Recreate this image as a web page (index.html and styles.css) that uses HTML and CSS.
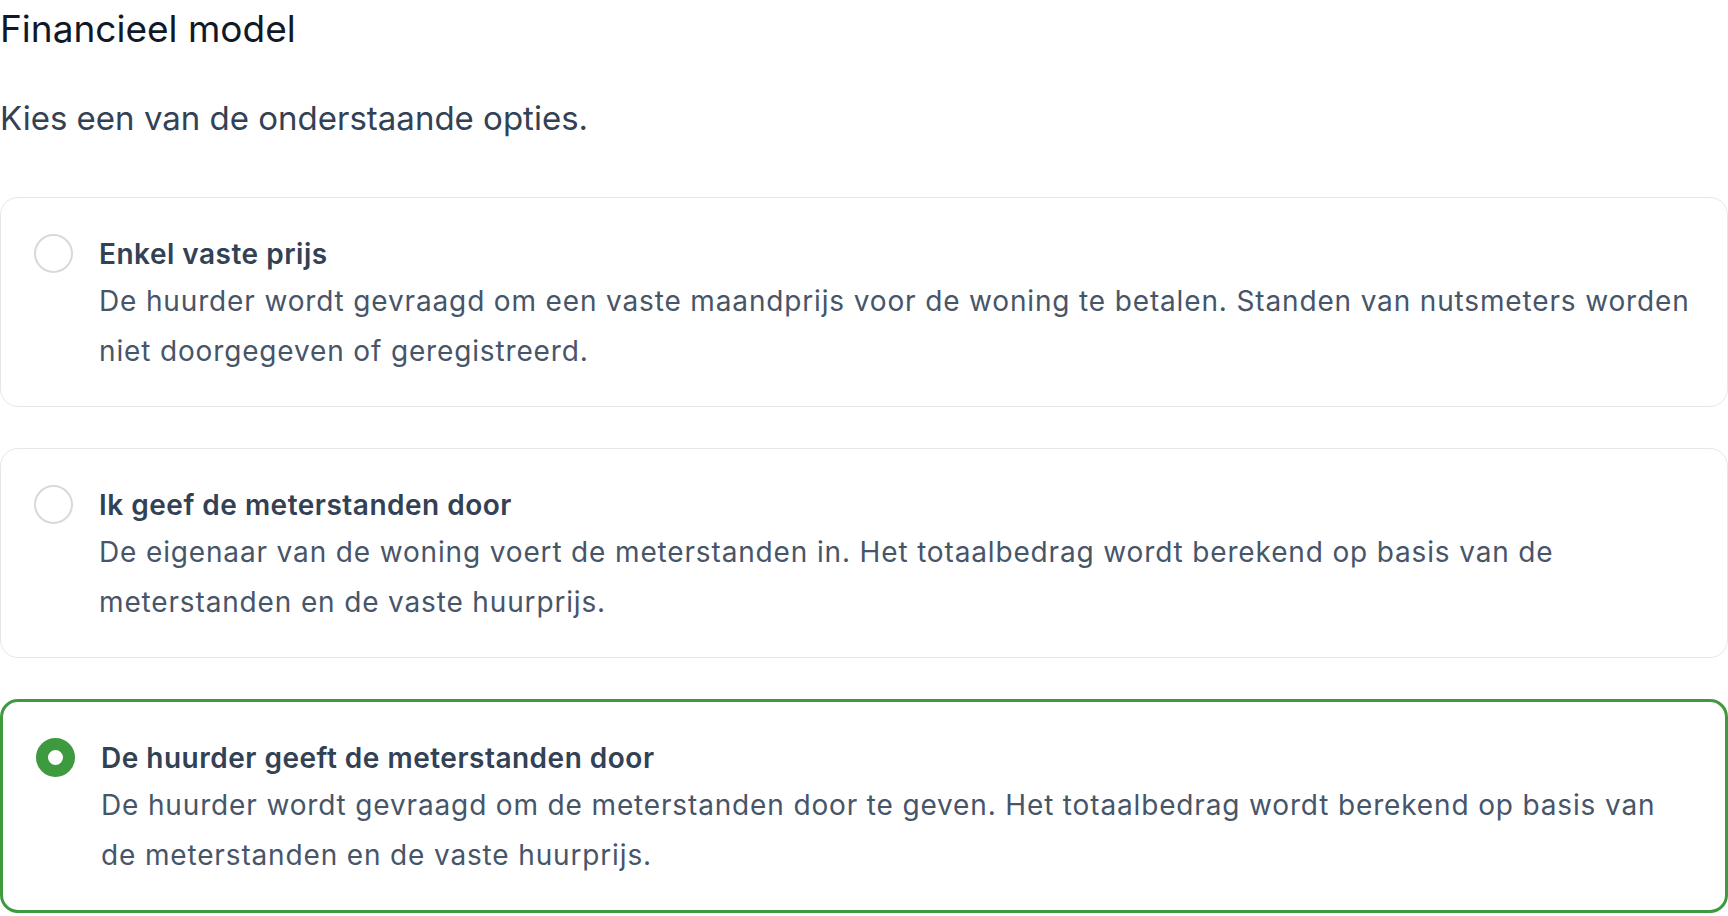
FILE: index.html
```html
<!DOCTYPE html>
<html lang="nl">
<head>
  <meta charset="UTF-8">
  <title>Financieel model</title>
  <link rel="stylesheet" href="styles.css">
</head>
<body>
  <div class="page">
    <h1 class="title">Financieel model</h1>
    <p class="lead">Kies een van de onderstaande opties.</p>

    <div class="options">
      <div class="option">
        <span class="radio"></span>
        <div class="option-text">
          <div class="option-title">Enkel vaste prijs</div>
          <div class="option-desc">De huurder wordt gevraagd om een vaste maandprijs voor de woning te betalen. Standen van nutsmeters worden niet doorgegeven of geregistreerd.</div>
        </div>
      </div>

      <div class="option">
        <span class="radio"></span>
        <div class="option-text">
          <div class="option-title">Ik geef de meterstanden door</div>
          <div class="option-desc">De eigenaar van de woning voert de meterstanden in. Het totaalbedrag wordt berekend op basis van de meterstanden en de vaste huurprijs.</div>
        </div>
      </div>

      <div class="option selected">
        <span class="radio"></span>
        <div class="option-text">
          <div class="option-title">De huurder geeft de meterstanden door</div>
          <div class="option-desc">De huurder wordt gevraagd om de meterstanden door te geven. Het totaalbedrag wordt berekend op basis van de meterstanden en de vaste huurprijs.</div>
        </div>
      </div>
    </div>
  </div>
</body>
</html>
```

FILE: styles.css
```css
body {
  margin: 0;
  font-family: "Inter", "Noto Sans", sans-serif;
  background: #fff;
}

.title {
  margin: 0;
  padding-top: 6px;
  font-size: 37px;
  line-height: 45px;
  font-weight: 400;
  color: #111827;
}

.lead {
  margin: 47px 0 0;
  font-size: 33px;
  line-height: 40px;
  color: #334155;
}

.options {
  display: flex;
  flex-direction: column;
  gap: 41px;
  margin-top: 59px;
}

.option {
  display: flex;
  align-items: flex-start;
  gap: 26px;
  padding: 34px 31px 30px 33px;
  border: 1px solid #e5e7eb;
  border-radius: 18px;
}

.option.selected {
  border: 3px solid #3d9a3f;
}

.radio {
  flex: none;
  width: 39px;
  height: 39px;
  margin-top: 2px;
  box-sizing: border-box;
  border: 2px solid #d6d9de;
  border-radius: 50%;
}

.option.selected .radio {
  border: 12.5px solid #3d9a3f;
  background: #fff;
}

.option-title {
  font-size: 28px;
  line-height: 44px;
  font-weight: 600;
  letter-spacing: 0.5px;
  color: #334155;
}

.option-desc {
  font-size: 28px;
  line-height: 50px;
  letter-spacing: 0.85px;
  color: #475569;
}
```
